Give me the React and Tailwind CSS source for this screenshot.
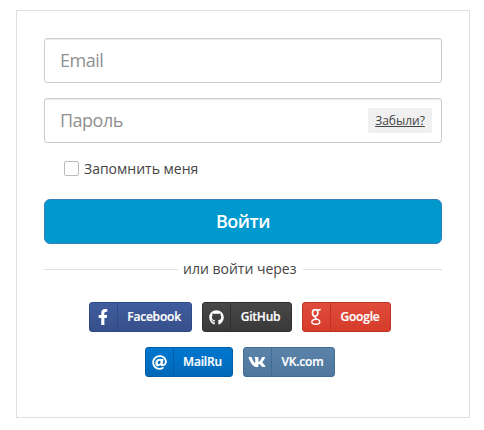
import { FaFacebookF, FaGithub, FaAt, FaVk } from "react-icons/fa";

function GoogleIcon({ className }) {
  return (
    <svg viewBox="0 0 10 16" fill="none" stroke="currentColor" className={className}>
      <ellipse cx="4.2" cy="4" rx="2.7" ry="3.3" strokeWidth="1.7" />
      <path d="M4.3 0.6H9.7L8.4 1.4H6.6" strokeWidth="1" />
      <path d="M4.6 7.3C3.4 8.3 3.9 9 5.2 9.6C7.6 10.7 8.8 11.3 8.8 12.7C8.8 14.4 7.2 15.3 4.7 15.3C2.3 15.3 0.8 14.4 0.8 12.9C0.8 11.3 2.6 10.3 5.4 10.2" strokeWidth="1.4" />
    </svg>
  );
}

function SocialButton({ label, icon, className, divider }) {
  return (
    <button className={`flex h-[30px] shrink-0 overflow-hidden rounded-[3px] border text-white ${className}`}>
      <span className={`flex h-full w-7 shrink-0 items-center justify-center border-r ${divider}`}>{icon}</span>
      <span className="flex h-full flex-1 items-center justify-center text-[12px] font-semibold tracking-[-0.2px] [-webkit-text-stroke:0.2px_white]">
        {label}
      </span>
    </button>
  );
}

export default function App() {
  return (
    <div className="h-[430px] w-[484px] bg-white pl-4 pt-2.5 font-['Open_Sans','Noto_Sans',sans-serif] text-[#444]">
      <div className="h-[408px] w-[454px] border border-[#e0e0e0] px-[27px] pt-[27px]">
        <input
          type="text"
          placeholder="Email"
          className="block h-[45px] w-full rounded-[3px] border border-[#ccc] px-[15px] pb-0.5 text-[18px] tracking-[-0.5px] shadow-[inset_0_1px_1px_rgba(0,0,0,0.075)] placeholder:text-[#909090]"
        />
        <div className="mt-[15px] flex h-[45px] items-center rounded-[3px] border border-[#ccc] pr-[9px] shadow-[inset_0_1px_1px_rgba(0,0,0,0.075)]">
          <input
            type="password"
            placeholder="Пароль"
            className="h-full min-w-0 flex-1 px-[15px] pb-0.5 text-[18px] tracking-[-0.5px] placeholder:text-[#909090]"
          />
          <a href="#" className="flex h-[25px] w-16 items-center justify-center rounded-[2px] bg-[#f0f0f0] text-[12px] underline">
            Забыли?
          </a>
        </div>
        <label className="mt-[15px] flex h-5 items-center pl-5 text-[14px]">
          <input type="checkbox" className="mr-[5px] size-[15px] appearance-none rounded-[2px] border border-[#bbb]" />
          Запомнить меня
        </label>
        <button className="mt-[21px] block h-[45px] w-full rounded-md border border-[#357ebd] bg-[#0099cd] text-[18px] font-semibold tracking-[-0.5px] text-white">
          Войти
        </button>
        <div className="mt-[15px] flex h-5 items-center text-[14px]">
          <span className="h-px w-[134px] bg-[#e0e0e0]" />
          <span className="pl-[5px] pr-1.5 pb-0.5">или войти через</span>
          <span className="h-px flex-1 bg-[#e0e0e0]" />
        </div>
        <div className="mt-[23px] flex flex-wrap justify-center gap-x-2.5 gap-y-[15px] pr-[7px]">
          <SocialButton
            label="Facebook"
            icon={<FaFacebookF className="size-4" />}
            className="w-[103px] border-[#2d4a86] bg-linear-to-b from-[#3f5c9d] to-[#37508b]"
            divider="border-[#2d4a86]"
          />
          <SocialButton
            label="GitHub"
            icon={<FaGithub className="size-[15px]" />}
            className="w-[90px] border-[#303030] bg-linear-to-b from-[#484848] to-[#393939]"
            divider="border-[#303030]"
          />
          <SocialButton
            label="Google"
            icon={<GoogleIcon className="h-4 w-2.5" />}
            className="w-[89px] border-[#bd3424] bg-linear-to-b from-[#e14b3b] to-[#d53c2a]"
            divider="border-[#bd3424]"
          />
          <SocialButton
            label="MailRu"
            icon={<FaAt className="size-[15px]" />}
            className="w-[88px] border-[#005da6] bg-linear-to-b from-[#0077cf] to-[#0069b8]"
            divider="border-[#005da6]"
          />
          <SocialButton
            label="VK.com"
            icon={<FaVk className="size-[18px]" />}
            className="w-[92px] border-[#446b91] bg-linear-to-b from-[#5b83aa] to-[#4f769d]"
            divider="border-[#446b91]"
          />
        </div>
      </div>
    </div>
  );
}
